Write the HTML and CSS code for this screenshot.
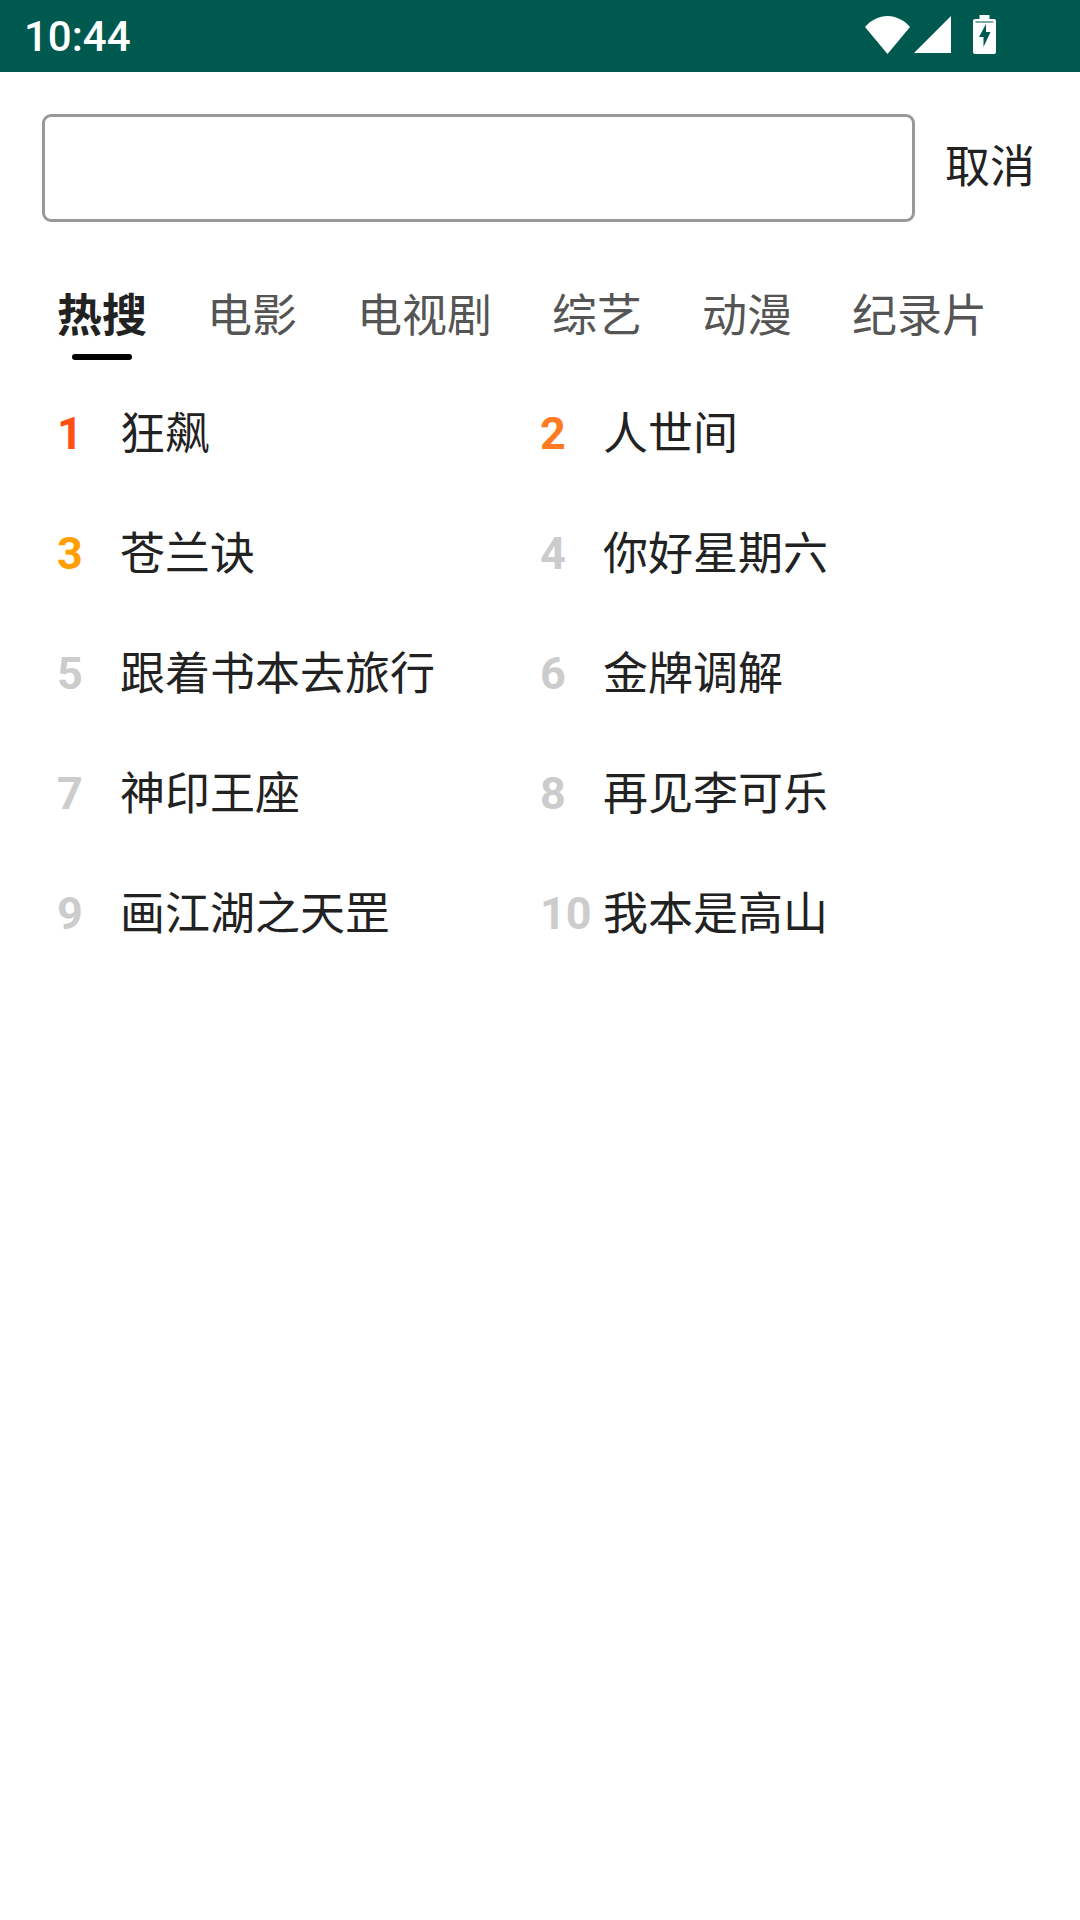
FILE: index.html
```html
<!DOCTYPE html>
<html lang="zh-CN">
<head>
    <meta charset="UTF-8">
    <meta name="viewport" content="width=device-width, initial-scale=1.0">
    <title>搜索</title>
    <link rel="stylesheet" href="styles.css">
</head>
<body>
    <div class="status-bar">
        <span class="time">10:44</span>
        <div class="status-icons">
            <svg class="icon-wifi" width="45" height="38" viewBox="0 0 45 38"><path d="M0 11C6 4 14 0 22.500 0S39 4 45 11L22.500 38z" fill="#fff"/></svg>
            <svg class="icon-signal" width="37" height="37" viewBox="0 0 37 37"><path d="M37 0V37H0z" fill="#fff"/></svg>
            <svg class="icon-battery" width="23" height="39" viewBox="0 0 23 39"><path d="M6.500 0h10v4h4.500a2 2 0 0 1 2 2v31a2 2 0 0 1-2 2H2a2 2 0 0 1-2-2V6a2 2 0 0 1 2-2h4.500z" fill="#fff"/><path d="M13 9l-7 13h4.500v10l7-15h-4.500z" fill="#00594f"/><path d="M2.500 7h18" stroke="#00594f" stroke-width="1"/></svg>
        </div>
    </div>

    <div class="search-row">
        <div class="search-box"></div>
        <span class="cancel">取消</span>
    </div>

    <div class="tabs">
        <div class="tab active">热搜</div>
        <div class="tab">电影</div>
        <div class="tab">电视剧</div>
        <div class="tab">综艺</div>
        <div class="tab">动漫</div>
        <div class="tab">纪录片</div>
    </div>

    <div class="hot-list">
        <div class="hot-item"><span class="rank rank-1">1</span><span class="name">狂飙</span></div>
        <div class="hot-item"><span class="rank rank-2">2</span><span class="name">人世间</span></div>
        <div class="hot-item"><span class="rank rank-3">3</span><span class="name">苍兰诀</span></div>
        <div class="hot-item"><span class="rank">4</span><span class="name">你好星期六</span></div>
        <div class="hot-item"><span class="rank">5</span><span class="name">跟着书本去旅行</span></div>
        <div class="hot-item"><span class="rank">6</span><span class="name">金牌调解</span></div>
        <div class="hot-item"><span class="rank">7</span><span class="name">神印王座</span></div>
        <div class="hot-item"><span class="rank">8</span><span class="name">再见李可乐</span></div>
        <div class="hot-item"><span class="rank">9</span><span class="name">画江湖之天罡</span></div>
        <div class="hot-item"><span class="rank">10</span><span class="name">我本是高山</span></div>
    </div>
</body>
</html>
```

FILE: styles.css
```css
body {
    margin: 0;
    width: 1080px;
    height: 1920px;
    background-color: #fff;
    font-family: Roboto, "Noto Sans CJK SC", sans-serif;
    overflow: hidden;
}
.status-bar {
    box-sizing: border-box;
    height: 72px;
    background-color: #00594f;
    color: #fff;
    display: flex;
    align-items: center;
    justify-content: space-between;
    padding: 0 84px 0 24px;
}
.time {
    font-size: 42px;
    font-weight: 500;
}
.status-icons {
    display: flex;
    align-items: center;
    gap: 4px;
    margin-top: -3px;
}
.icon-battery {
    margin-left: 18px;
}
.search-row {
    display: flex;
    align-items: center;
    padding: 42px 0 0 42px;
}
.search-box {
    flex: none;
    box-sizing: border-box;
    width: 873px;
    height: 108px;
    border: 3px solid #999;
    border-radius: 9px;
}
.cancel {
    margin-left: 30px;
    font-size: 45px;
    color: #222;
    white-space: nowrap;
    margin-bottom: 9px;
}
.tabs {
    display: flex;
    gap: 60px;
    padding: 65px 0 0 57px;
    height: 83px;
}
.tab {
    position: relative;
    font-size: 45px;
    line-height: 60px;
    color: #555;
}
.tab.active {
    color: #222;
    font-weight: bold;
}
.tab.active::after {
    content: "";
    position: absolute;
    left: 15px;
    right: 15px;
    top: 67px;
    height: 6px;
    border-radius: 3px;
    background-color: #000;
}
.hot-list {
    display: grid;
    grid-template-columns: 483px 483px;
    grid-auto-rows: 120px;
    padding: 0 0 0 57px;
}
.hot-item {
    display: flex;
    align-items: center;
    font-size: 45px;
    color: #222;
}
.rank {
    width: 63px;
    flex: none;
    font-weight: bold;
    font-size: 45px;
    color: #ccc;
    position: relative;
    top: 3px;
}
.rank-1 { color: #ff4f14; }
.rank-2 { color: #ff7a22; }
.rank-3 { color: #ffa000; }
```
